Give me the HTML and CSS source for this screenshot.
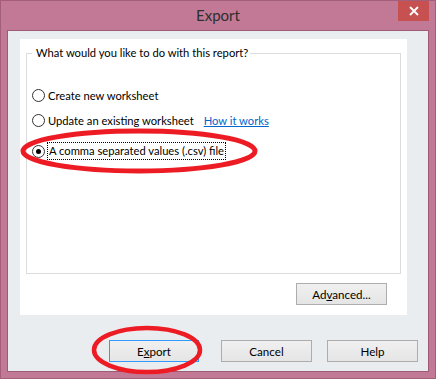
FILE: index.html
```html
<!DOCTYPE html>
<html lang="en">
<head>
    <meta charset="UTF-8">
    <title>Export</title>
    <link rel="stylesheet" href="styles.css">
</head>
<body>

<div class="window">
    <div class="titlebar">
        <span></span>
        <div class="title">Export</div>
        <button class="close" aria-label="Close">
            <svg width="10" height="10" viewBox="0 0 10 10">
                <path d="M1 1 L9 9 M9 1 L1 9" stroke="#fff" stroke-width="1.8" fill="none"/>
            </svg>
        </button>
    </div>

    <div class="client">
        <div class="panel">
            <fieldset class="group">
                <legend>What would you like to do with this report?</legend>
                <div class="options">
                    <label class="option">
                        <span class="radio"></span>
                        <span class="text">Create new worksheet</span>
                    </label>
                    <label class="option second">
                        <span class="radio"></span>
                        <span class="text">Update an existing worksheet</span>
                        <a class="link" href="#">How it works</a>
                    </label>
                    <label class="option third">
                        <span class="radio checked"></span>
                        <span class="text focused">A comma separated values (.csv) file</span>
                    </label>
                </div>
            </fieldset>
            <div class="panel-actions">
                <button class="btn">Ad<u>v</u>anced...</button>
            </div>
        </div>

        <div class="dialog-buttons">
            <button class="btn default">E<u>x</u>port</button>
            <button class="btn cancel">Cancel</button>
            <button class="btn help">Help</button>
        </div>
    </div>

    <!-- red hand drawn marks -->
    <svg class="marks" width="436" height="379" viewBox="0 0 436 379">
        <ellipse cx="139" cy="151" rx="116" ry="20" fill="none" stroke="#ed1c24" stroke-width="5"/>
        <ellipse cx="147" cy="350" rx="53" ry="22" fill="none" stroke="#ed1c24" stroke-width="4.5"/>
    </svg>
</div>

</body>
</html>
```

FILE: styles.css
```css
* {
    box-sizing: border-box;
}

body {
    margin: 0;
    font-family: Lato, 'Liberation Sans', sans-serif;
    font-size: 11.2px;
    color: #000;
}

.window {
    position: relative;
    width: 436px;
    height: 379px;
    background: #c27995;
    border: 1px solid #a35f79;
}

/* Title bar */
.titlebar {
    display: grid;
    grid-template-columns: 1fr auto 1fr;
    height: 29px;
}

.title {
    font-size: 15px;
    line-height: 29px;
    color: #2e2e2e;
}

.close {
    justify-self: end;
    width: 31px;
    height: 20px;
    margin-right: 6px;
    padding: 0;
    border: none;
    background: #c75050;
    display: flex;
    align-items: center;
    justify-content: center;
}

/* Client area */
.client {
    margin: 0 6px;
    height: 342px;
    border: 1px solid #9e5b75;
    background: #e9edf0;
    padding: 8px 0 0 12px;
}

.panel {
    width: 387px;
    height: 276px;
    background: #fff;
    padding-top: 6px;
    display: flex;
    flex-direction: column;
}

.group {
    margin: 0 6px;
    padding: 0 0 0 5px;
    height: 229px;
    min-width: 0;
    border: 1px solid #dcdcdc;
}

.group legend {
    padding: 0 2px 0 4px;
    line-height: 16px;
}

.options {
    display: flex;
    flex-direction: column;
    padding-top: 25px;
}

.option {
    display: flex;
    align-items: center;
    height: 18px;
}

.option.second {
    margin-top: 7px;
}

.option.third {
    margin-top: 13px;
}

.radio {
    width: 13px;
    height: 13px;
    margin-right: 3px;
    border: 1px solid #333;
    border-radius: 50%;
    background: #fff;
    display: grid;
    place-items: center;
}

.radio.checked::after {
    content: "";
    width: 5px;
    height: 5px;
    border-radius: 50%;
    background: #000;
}

.text.focused {
    margin-left: -1px;
    padding: 0 1px;
    line-height: 16px;
    border: 1px dotted #000;
}

.link {
    margin-left: 10px;
    color: #0066cc;
    text-decoration: underline;
}

.panel-actions {
    display: flex;
    justify-content: flex-end;
    margin-top: 9px;
    padding-right: 20px;
}

/* Buttons */
.btn {
    width: 91px;
    height: 22px;
    padding: 0;
    font-family: inherit;
    font-size: 11.6px;
    color: #000;
    border: 1px solid #adadad;
    background: linear-gradient(#f0f0f0, #e5e5e5);
}

.btn.default {
    width: 90px;
    border-color: #3399ff;
}

.dialog-buttons {
    display: flex;
    margin-top: 25px;
    padding-left: 89px;
}

.btn.cancel {
    margin-left: 22px;
}

.btn.help {
    margin-left: 15px;
}

.marks {
    position: absolute;
    left: -1px;
    top: -1px;
    pointer-events: none;
}
```
